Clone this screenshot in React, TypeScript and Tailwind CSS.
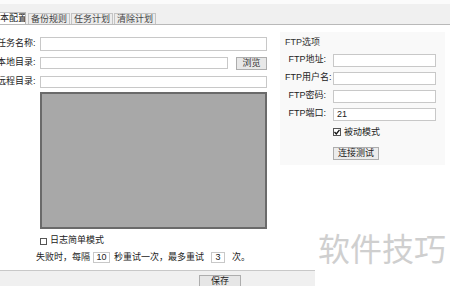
import React from "react";

export default function App() {
  const font = { fontFamily: '"Liberation Sans", "Noto Sans CJK SC", sans-serif' };
  return (
    <div className="w-[450px] h-[286px] bg-white relative overflow-hidden text-[9px] text-[#222]" style={font}>
      {/* tab bar */}
      <div className="h-[4px] bg-[#fbfbfb]" />
      <div className="h-[21px] bg-[#f0f0f0] border-b border-[#b9b9b9] flex items-end pl-0">
        <div className="h-[12px] bg-white border border-b-0 border-[#b9b9b9] border-l-0 leading-[11px] w-[26px] overflow-hidden whitespace-nowrap">
          本配置
        </div>
        <div className="ml-[2px] h-[11px] px-[2px] border border-b-0 border-[#c4c4c4] bg-[#ececec] leading-[10px] text-[#444]">备份规则</div>
        <div className="ml-[1px] h-[11px] px-[2px] border border-b-0 border-[#c4c4c4] bg-[#ececec] leading-[10px] text-[#444]">任务计划</div>
        <div className="ml-[1px] h-[11px] px-[2px] border border-b-0 border-[#c4c4c4] bg-[#ececec] leading-[10px] text-[#444]">清除计划</div>
      </div>

      <div className="flex">
        {/* left form */}
        <div className="w-[280px] pt-[12px] shrink-0">
          <div className="flex items-center h-[14px]">
            <div className="w-[40px] shrink-0">
              <span className="block whitespace-nowrap -ml-[3px]">任务名称:</span>
            </div>
            <div className="w-[227px] h-[14px] border border-[#c8c8c8] bg-white" />
          </div>
          <div className="flex items-center h-[14px] mt-[5px]">
            <div className="w-[40px] shrink-0">
              <span className="block whitespace-nowrap -ml-[3px]">本地目录:</span>
            </div>
            <div className="w-[188px] h-[12px] border border-[#c8c8c8] bg-white" />
            <div className="ml-[8px] w-[31px] h-[13px] border border-[#adadad] bg-[#e8e8e8] text-center leading-[11px] text-[#333]">浏览</div>
          </div>
          <div className="flex items-center h-[14px] mt-[5px]">
            <div className="w-[40px] shrink-0">
              <span className="block whitespace-nowrap -ml-[3px]">远程目录:</span>
            </div>
            <div className="w-[227px] h-[12px] border border-[#c8c8c8] bg-white" />
          </div>
          <div className="ml-[40px] mt-[3px] w-[227px] h-[137px] bg-[#a8a8a8] border-2 border-[#6a6a6a]" />
          <div className="ml-[40px] mt-[7px] flex items-center h-[10px]">
            <div className="w-[7px] h-[7px] border border-[#555] bg-white" />
            <span className="ml-[3px]">日志简单模式</span>
          </div>
          <div className="ml-[36px] mt-[6px] flex items-center h-[11px]">
            <span>失败时，每隔</span>
            <div className="ml-[3px] w-[17px] h-[11px] border border-[#c8c8c8] text-center leading-[9px]">10</div>
            <span className="ml-[4px]">秒重试一次，最多重试</span>
            <div className="ml-[7px] w-[14px] h-[11px] border border-[#c8c8c8] text-center leading-[9px]">3</div>
            <span className="ml-[7px]">次。</span>
          </div>
        </div>

        {/* FTP panel */}
        <div className="mt-[7px] w-[165px] h-[133px] bg-[#f9f9f9] pl-[5px] pt-[4px]">
          <div className="text-[#333]">FTP选项</div>
          <div className="mt-[4px] flex flex-col gap-[5px]">
            {["FTP地址:", "FTP用户名:", "FTP密码:", "FTP端口:"].map((l, i) => (
              <div key={l} className="flex items-center h-[13px]">
                <span className="w-[41px] text-right whitespace-nowrap">{l}</span>
                <div className="ml-[7px] w-[103px] h-[13px] border border-[#c8c8c8] bg-white leading-[11px] pl-[3px]">
                  {i === 3 ? "21" : ""}
                </div>
              </div>
            ))}
          </div>
          <div className="ml-[48px] mt-[5px] flex items-center">
            <div className="w-[8px] h-[8px] border border-[#555] bg-white flex items-center justify-center">
              <svg width="6" height="6" viewBox="0 0 6 6">
                <path d="M0.5 3 L2.3 5 L5.5 0.8" stroke="#111" strokeWidth="1.3" fill="none" />
              </svg>
            </div>
            <span className="ml-[3px]">被动模式</span>
          </div>
          <div className="ml-[48px] mt-[8px] w-[46px] h-[13px] border border-[#adadad] bg-[#ececec] text-center leading-[11px]">连接测试</div>
        </div>
      </div>

      {/* bottom bar */}
      <div className="absolute left-0 top-[270px] w-[315px] h-[16px] bg-[#f0f0f0] border-t border-[#c8c8c8]">
        <div className="ml-[199px] mt-[4px] w-[42px] h-[14px] border border-[#adadad] bg-[#e6e6e6] text-center leading-[11px]">保存</div>
      </div>

      {/* watermark */}
      <div className="absolute left-[318px] top-[229px] text-[32px] leading-[36px] text-[#cfcfcf]" style={{ fontFamily: '"Noto Sans CJK SC", sans-serif' }}>
        软件技巧
      </div>
    </div>
  );
}
